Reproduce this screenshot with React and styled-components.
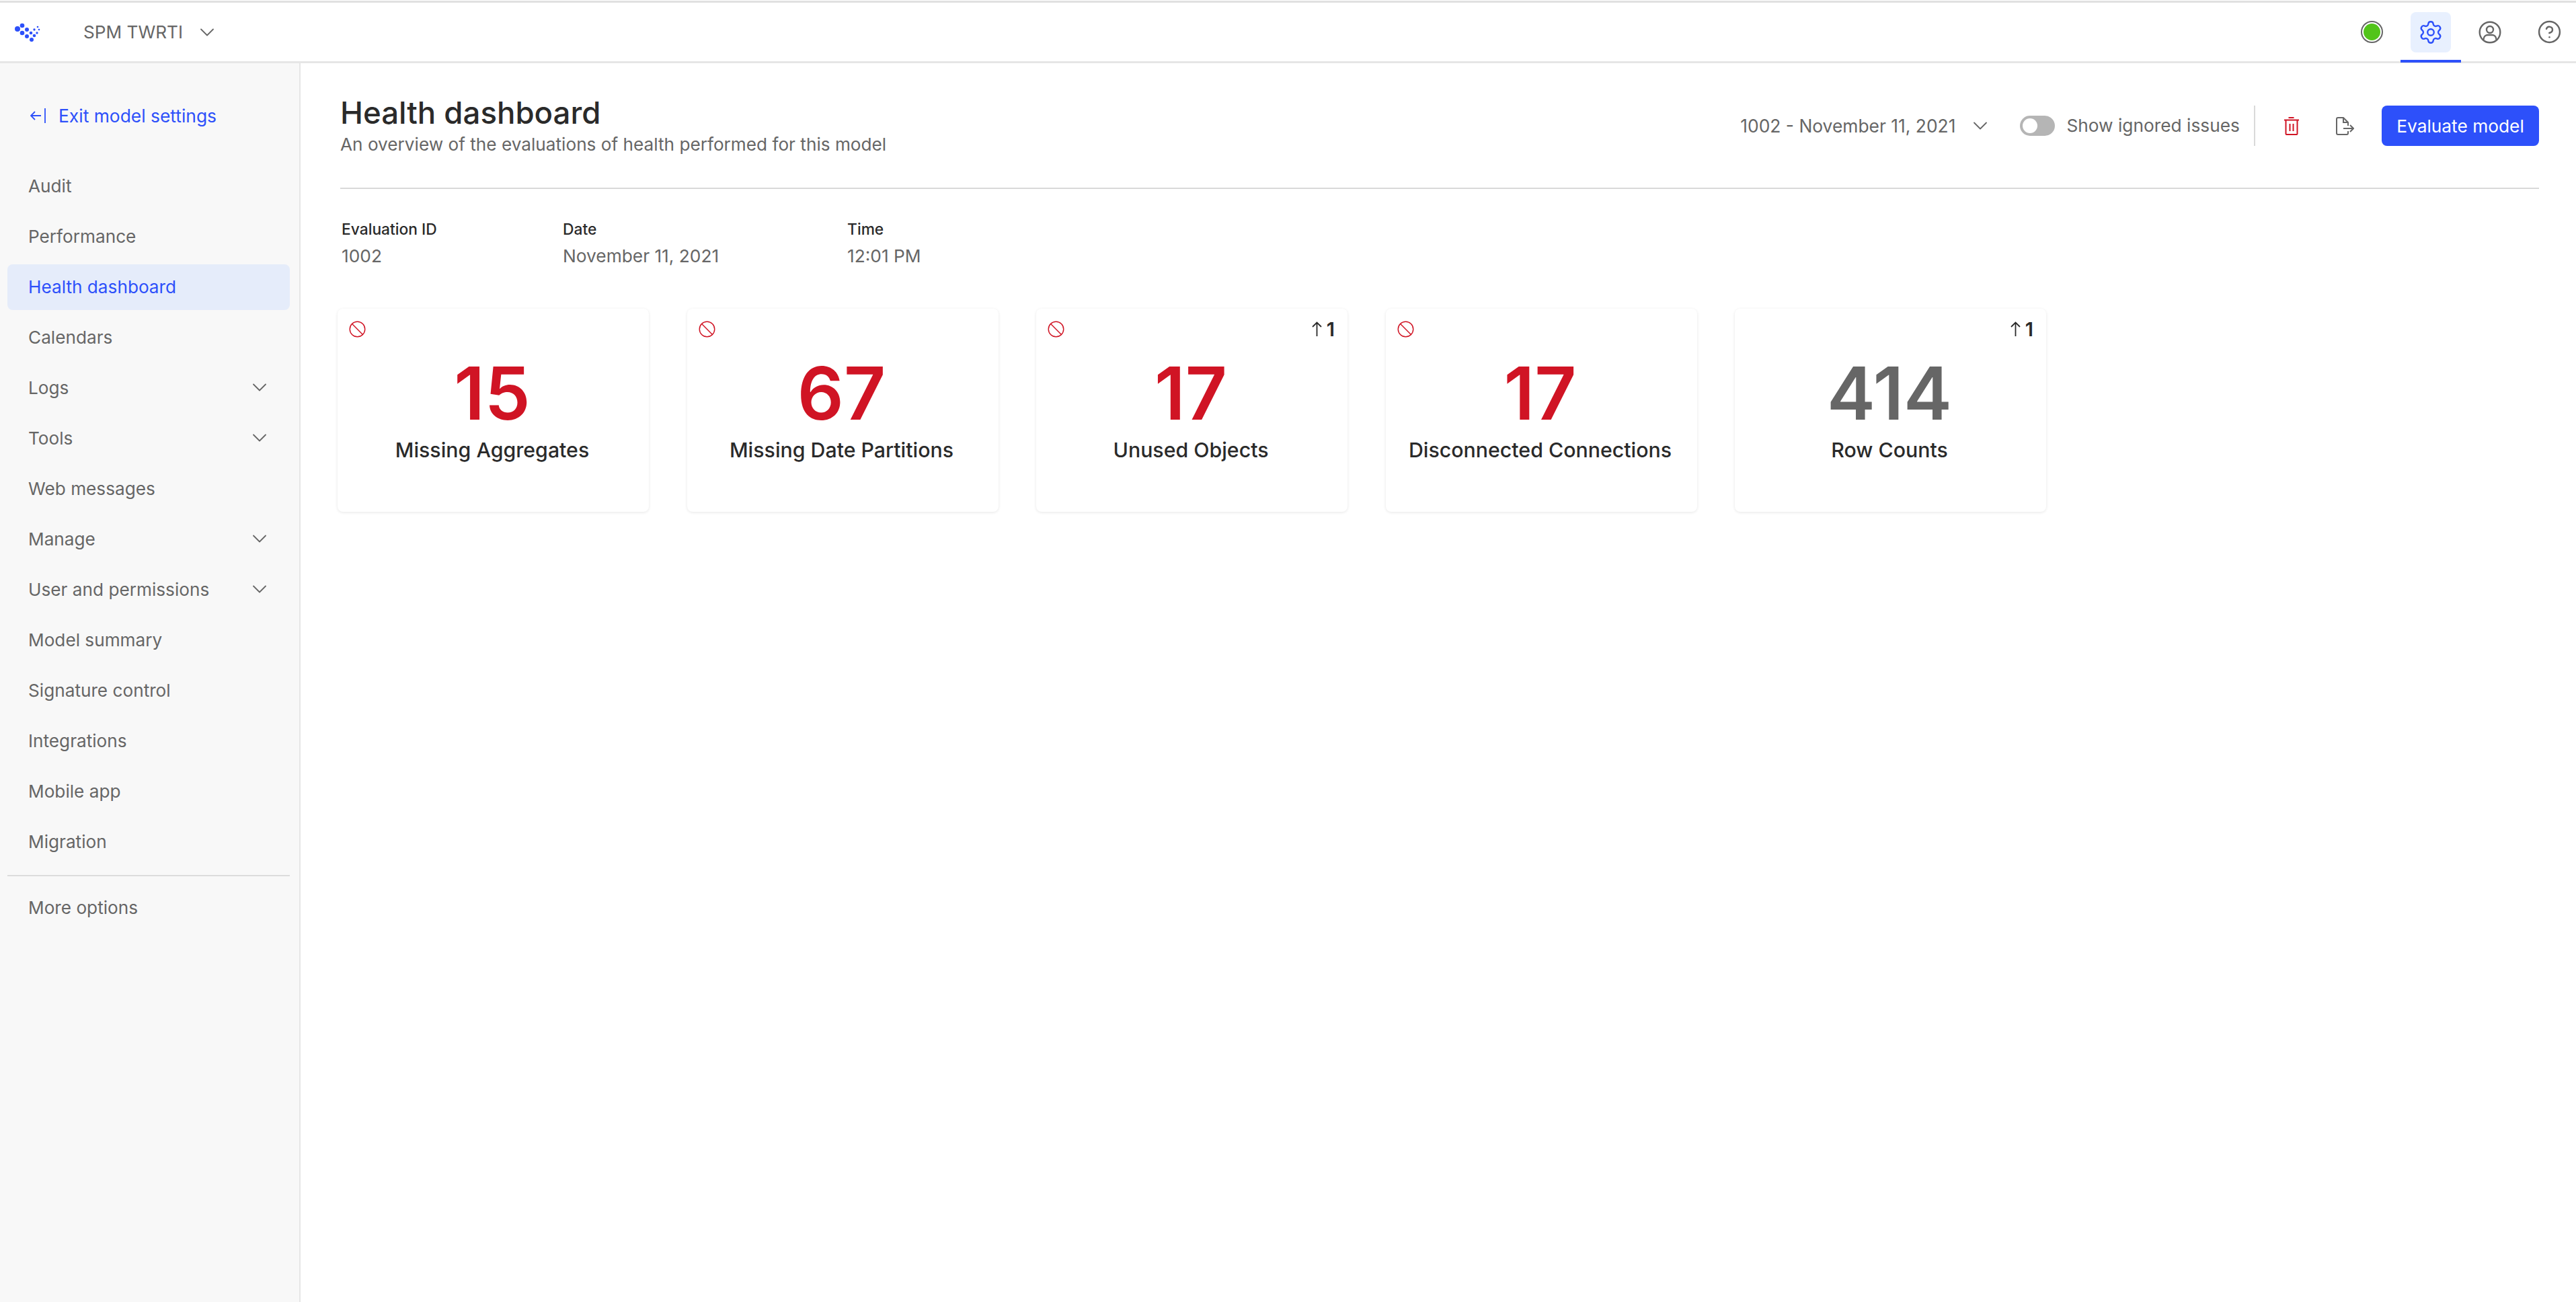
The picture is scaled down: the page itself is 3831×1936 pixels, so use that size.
import React from 'react';
import styled, { createGlobalStyle } from 'styled-components';
import { Ban, ChevronDown, CircleHelp, Settings } from 'lucide-react';

const GlobalStyle = createGlobalStyle`
  html, body {
    margin: 0;
    padding: 0;
    background: #fff;
  }
  * {
    box-sizing: border-box;
  }
  body {
    font-family: Inter, "Liberation Sans", sans-serif;
    color: #666;
  }
`;

const Page = styled.div`
  display: flex;
  flex-direction: column;
  height: 100vh;
  padding-top: 1px;
  overflow: hidden;
`;

const TopBar = styled.header`
  display: flex;
  align-items: center;
  justify-content: space-between;
  flex: none;
  height: 93px;
  padding: 0 22px;
  border-top: 3px solid #e0e0e0;
  border-bottom: 3px solid #e6e6e6;
`;

const Brand = styled.div`
  display: flex;
  align-items: center;
`;

const Logo = styled.svg`
  width: 38px;
  height: 28px;
  margin-right: 64px;
`;

const ModelName = styled.span`
  font-size: 26.2px;
  margin-right: 18px;
`;

const TopIcons = styled.div`
  display: flex;
  align-items: center;
  margin-right: -26px;
`;

const TopIcon = styled.div`
  position: relative;
  display: flex;
  align-items: center;
  justify-content: center;
  width: 88px;
  height: 60px;
  color: ${(p) => (p.$active ? '#2d50fa' : '#666')};

  &::before {
    content: '';
    display: ${(p) => (p.$active ? 'block' : 'none')};
    position: absolute;
    left: 14px;
    top: 0;
    width: 60px;
    height: 60px;
    border-radius: 8px;
    background: #e8f0fe;
  }

  &::after {
    content: '';
    display: ${(p) => (p.$active ? 'block' : 'none')};
    position: absolute;
    left: -1px;
    right: -1px;
    bottom: -15px;
    height: 4px;
    background: #2d50fa;
  }

  svg {
    position: relative;
  }
`;

const StatusDot = styled.div`
  width: 33px;
  height: 33px;
  border: 2.5px solid #666;
  border-radius: 50%;
  padding: 2px;

  &::after {
    content: '';
    display: block;
    width: 100%;
    height: 100%;
    border-radius: 50%;
    background: #52c41a;
  }
`;

const Body = styled.div`
  display: flex;
  flex: 1;
  min-height: 0;
`;

const Sidebar = styled.nav`
  display: flex;
  flex-direction: column;
  flex: none;
  width: 447px;
  padding: 45px 14px 0 11px;
  background: #f8f8f8;
  border-right: 2px solid #e6e6e6;
`;

const ExitLink = styled.div`
  display: flex;
  align-items: center;
  height: 68px;
  margin-bottom: 36px;
  padding: 0 0 2px 34px;
  color: #2d50fa;
  font-size: 26.4px;
`;

const ExitIcon = styled.svg`
  width: 24px;
  height: 24px;
  margin-right: 18px;
`;

const NavList = styled.div`
  display: flex;
  flex-direction: column;
  gap: 7px;
`;

const NavItem = styled.div`
  display: flex;
  align-items: center;
  justify-content: space-between;
  height: 68px;
  padding: 0 27px 2px 31px;
  border-radius: 8px;
  font-size: 26.2px;
  color: ${(p) => (p.$active ? '#2d50fa' : '#666')};
  background: ${(p) => (p.$active ? '#e5ecfa' : 'transparent')};
`;

const NavDivider = styled.div`
  height: 2px;
  margin: 8px 0 6px;
  background: #dcdcdc;
`;

const Main = styled.main`
  flex: 1;
  min-width: 0;
  padding: 0 55px;
`;

const PageHead = styled.div`
  display: flex;
  align-items: flex-start;
  justify-content: space-between;
  height: 187px;
  margin-left: 4px;
  padding-top: 45px;
  border-bottom: 2px solid #d9d9d9;
`;

const Title = styled.h1`
  margin: 0;
  color: #2a2a2a;
  font-size: 45.6px;
  font-weight: 500;
  line-height: 58px;
`;

const Subtitle = styled.p`
  margin: 0;
  font-size: 26.2px;
  line-height: 36px;
`;

const Actions = styled.div`
  display: flex;
  align-items: center;
  height: 60px;
  margin-top: 18px;
`;

const DateSelect = styled.div`
  display: flex;
  align-items: center;
  gap: 19px;
  margin-right: 41px;
  font-size: 26.4px;
`;

const Switch = styled.div`
  display: flex;
  align-items: center;
  width: 52px;
  height: 30px;
  margin-right: 17px;
  padding: 4px;
  border-radius: 15px;
  background: #b5b5b5;

  &::after {
    content: '';
    width: 22px;
    height: 22px;
    border-radius: 50%;
    background: #fff;
  }
`;

const SwitchLabel = styled.span`
  padding-right: 21px;
  font-size: 26.3px;
  border-right: 2px solid #d9d9d9;
  line-height: 60px;
`;

const TrashIcon = styled.svg`
  width: 24px;
  height: 27px;
  margin-left: 42px;
`;

const ExportIcon = styled.svg`
  width: 27px;
  height: 27px;
  margin-left: 54px;
`;

const PrimaryButton = styled.button`
  width: 234px;
  height: 60px;
  margin-left: 41px;
  border: 0;
  border-radius: 8px;
  background: #2d50fa;
  color: #fff;
  font-family: inherit;
  font-size: 26.3px;
`;

const Meta = styled.div`
  display: flex;
  margin: 43px 0 0 6px;
`;

const MetaItem = styled.div`
  width: ${(p) => p.$width}px;
`;

const MetaLabel = styled.div`
  color: #2a2a2a;
  font-size: 22.8px;
  font-weight: 500;
  line-height: 34px;
`;

const MetaValue = styled.div`
  margin-top: 5px;
  font-size: 26.3px;
  line-height: 36px;
`;

const Cards = styled.div`
  display: flex;
  gap: 56.5px;
  margin-top: 60px;
`;

const Card = styled.div`
  display: flex;
  flex-direction: column;
  align-items: center;
  width: 463px;
  height: 302px;
  padding: 17px 19px 0 16px;
  border-radius: 8px;
  background: #fff;
  box-shadow: 0 1px 4px rgba(0, 0, 0, 0.1);
`;

const CardTop = styled.div`
  display: flex;
  align-items: center;
  justify-content: space-between;
  align-self: stretch;
  height: 26px;
`;

const Delta = styled.div`
  display: flex;
  align-items: center;
  gap: 7px;
  margin-left: auto;
  color: #2a2a2a;
  font-size: 29px;
  font-weight: 600;
`;

const Value = styled.div`
  margin-top: 19px;
  color: ${(p) => (p.$alert ? '#d01424' : '#666')};
  font-size: 108px;
  font-weight: 600;
  line-height: 128px;
`;

const CardLabel = styled.div`
  color: #2a2a2a;
  font-size: 30.3px;
  font-weight: 500;
  line-height: 40px;
`;

const navItems = [
  { label: 'Audit' },
  { label: 'Performance' },
  { label: 'Health dashboard', active: true },
  { label: 'Calendars' },
  { label: 'Logs', expandable: true },
  { label: 'Tools', expandable: true },
  { label: 'Web messages' },
  { label: 'Manage', expandable: true },
  { label: 'User and permissions', expandable: true },
  { label: 'Model summary' },
  { label: 'Signature control' },
  { label: 'Integrations' },
  { label: 'Mobile app' },
  { label: 'Migration' },
];

const cards = [
  { value: 15, label: 'Missing Aggregates', alert: true },
  { value: 67, label: 'Missing Date Partitions', alert: true },
  { value: 17, label: 'Unused Objects', alert: true, delta: 1 },
  { value: 17, label: 'Disconnected Connections', alert: true },
  { value: 414, label: 'Row Counts', delta: 1 },
];

const logoDots = [
  [26, 42, 12], [33, 37, 10], [33, 48, 10], [40, 43, 9], [40, 53, 9], [47, 58, 9],
  [46, 48, 7], [51, 52, 7], [51, 43, 5], [55, 48, 5], [56, 39, 4], [58, 43, 4],
];

const App = () => {
  return (
    <Page>
      <GlobalStyle />
      <TopBar>
        <Brand>
          <Logo viewBox="22 33 38 28">
            {logoDots.map(([x, y, d]) => (
              <circle key={`${x}-${y}`} cx={x} cy={y} r={d / 3} fill="#2d50fa" />
            ))}
          </Logo>
          <ModelName>SPM TWRTI</ModelName>
          <ChevronDown size={36} strokeWidth={1.2} />
        </Brand>
        <TopIcons>
          <TopIcon>
            <StatusDot />
          </TopIcon>
          <TopIcon $active>
            <Settings size={38} strokeWidth={1.5} />
          </TopIcon>
          <TopIcon>
            <svg width="36" height="36" viewBox="0 0 36 36" fill="none" stroke="currentColor" strokeWidth="2.4">
              <circle cx="18" cy="18" r="15.3" />
              <circle cx="18" cy="14" r="5" />
              <path d="M8.5 29c0-5 3.5-7 6.5-7h6c3 0 6.5 2 6.5 7" />
            </svg>
          </TopIcon>
          <TopIcon>
            <CircleHelp size={37} strokeWidth={1.6} />
          </TopIcon>
        </TopIcons>
      </TopBar>
      <Body>
        <Sidebar>
          <ExitLink>
            <ExitIcon viewBox="0 0 24 24" fill="none" stroke="currentColor" strokeWidth="1.8">
              <path d="M1 12h15M7 6l-6 6 6 6M22 1v22" />
            </ExitIcon>
            Exit model settings
          </ExitLink>
          <NavList>
            {navItems.map((item) => (
              <NavItem key={item.label} $active={item.active}>
                {item.label}
                {item.expandable && <ChevronDown size={36} strokeWidth={1.2} />}
              </NavItem>
            ))}
            <NavDivider />
            <NavItem>More options</NavItem>
          </NavList>
        </Sidebar>
        <Main>
          <PageHead>
            <div>
              <Title>Health dashboard</Title>
              <Subtitle>An overview of the evaluations of health performed for this model</Subtitle>
            </div>
            <Actions>
              <DateSelect>
                1002 - November 11, 2021
                <ChevronDown size={36} strokeWidth={1.2} />
              </DateSelect>
              <Switch />
              <SwitchLabel>Show ignored issues</SwitchLabel>
              <TrashIcon viewBox="0 0 24 27" fill="none" stroke="#d01424" strokeWidth="2">
                <path d="M7.5 1h8M1 4.5h22M3.5 4.5V25a1 1 0 0 0 1 1h15a1 1 0 0 0 1-1V4.5M9.5 10v11M14.5 10v11" />
              </TrashIcon>
              <ExportIcon viewBox="0 0 27 27" fill="none" stroke="#666" strokeWidth="2">
                <path d="M18 13V8l-7-7H3a2 2 0 0 0-2 2v21a2 2 0 0 0 2 2h13a2 2 0 0 0 2-2v-3M11 1v7h7M11 17h15M21 12l5 5-5 5" />
              </ExportIcon>
              <PrimaryButton>Evaluate model</PrimaryButton>
            </Actions>
          </PageHead>
          <Meta>
            <MetaItem $width={329}>
              <MetaLabel>Evaluation ID</MetaLabel>
              <MetaValue>1002</MetaValue>
            </MetaItem>
            <MetaItem $width={423}>
              <MetaLabel>Date</MetaLabel>
              <MetaValue>November 11, 2021</MetaValue>
            </MetaItem>
            <MetaItem $width={200}>
              <MetaLabel>Time</MetaLabel>
              <MetaValue>12:01 PM</MetaValue>
            </MetaItem>
          </Meta>
          <Cards>
            {cards.map((card) => (
              <Card key={card.label}>
                <CardTop>
                  {card.alert && <Ban size={27} strokeWidth={1.3} color="#d01424" />}
                  {card.delta && (
                    <Delta>
                      <svg width="15" height="22" viewBox="0 0 15 22" fill="none" stroke="#2a2a2a" strokeWidth="1.8">
                        <path d="M7.5 22V1.5M1 8l6.5-6.5L14 8" />
                      </svg>
                      {card.delta}
                    </Delta>
                  )}
                </CardTop>
                <Value $alert={card.alert}>{card.value}</Value>
                <CardLabel>{card.label}</CardLabel>
              </Card>
            ))}
          </Cards>
        </Main>
      </Body>
    </Page>
  );
};

export default App;
